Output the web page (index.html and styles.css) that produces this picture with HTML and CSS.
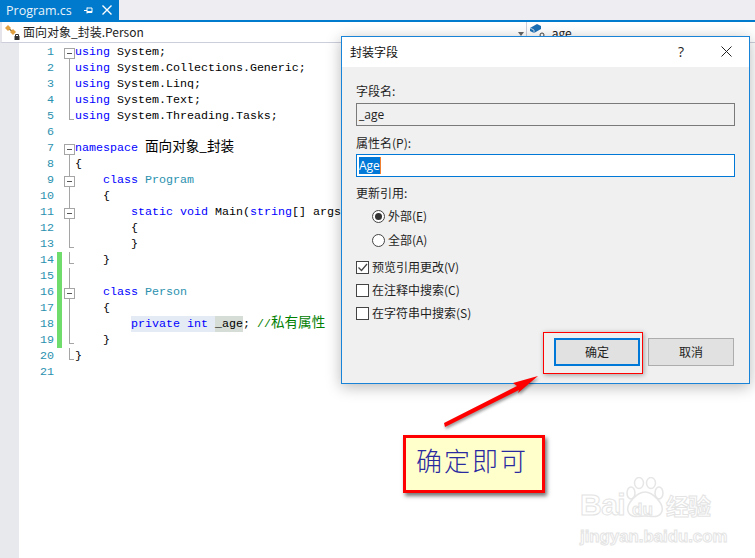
FILE: index.html
```html
<!DOCTYPE html>
<html lang="zh">
<head>
<meta charset="utf-8">
<title>封装字段</title>
<link rel="stylesheet" href="styles.css">
</head>
<body>
<div class="page">
  <div class="tabbar">
    <div class="tab">
      <span class="tab-name">Program.cs</span>
      <svg class="tab-pin" width="9" height="9" viewBox="0 0 9 9"><path d="M0 4.5H3M3 1.5V7.5M3 2H8V6.5H3M3 5.5H8" fill="none" stroke="#fff" stroke-width="1"/></svg>
      <svg class="tab-close" width="10" height="10" viewBox="0 0 10 10"><path d="M.5.5L9.500 9.500M9.500.5L.5 9.500" fill="none" stroke="#fff" stroke-width="1.400"/></svg>
    </div>
  </div>
  <div class="navbar">
    <div class="nav-left">
      <svg class="nav-icon" width="15" height="15" viewBox="0 0 15 15"><path d="M3 3L8 7" stroke="#8a6a30" stroke-width="1.500" fill="none"/><path d="M3 0L6 3L3 6L0 3Z" fill="#e0a040"/><path d="M8 4L11 7L8 10L5 7Z" fill="#e0a040"/><rect x="9.500" y="11" width="5" height="4" fill="#333"/><path d="M10.500 11V9.500H13.500V11" fill="none" stroke="#333"/></svg>
      <span class="nav-text nav-text-left">面向对象_封装.Person</span>
      <span class="nav-arrow"></span>
    </div>
    <div class="nav-right">
      <svg class="nav-icon-r" width="15" height="13" viewBox="0 0 15 13"><path d="M0 4L7 0L11 2V5L4 9L0 7Z" fill="#1c6fb5"/><path d="M0 4L4 6V9" fill="none" stroke="#bcd6ea"/><circle cx="12" cy="11" r="2" fill="none" stroke="#444"/></svg>
      <span class="nav-text">_age</span>
    </div>
  </div>
  <div class="workspace">
    <div class="editor">
      <div class="row"><span class="num">1</span><span class="mark"></span><span class="fold box"></span><code class="code"><b>using</b> System;</code></div>
      <div class="row"><span class="num">2</span><span class="mark"></span><span class="fold line"></span><code class="code"><b>using</b> System.Collections.Generic;</code></div>
      <div class="row"><span class="num">3</span><span class="mark"></span><span class="fold line"></span><code class="code"><b>using</b> System.Linq;</code></div>
      <div class="row"><span class="num">4</span><span class="mark"></span><span class="fold line"></span><code class="code"><b>using</b> System.Text;</code></div>
      <div class="row"><span class="num">5</span><span class="mark"></span><span class="fold end"></span><code class="code"><b>using</b> System.Threading.Tasks;</code></div>
      <div class="row"><span class="num">6</span><span class="mark"></span><span class="fold"></span><code class="code"></code></div>
      <div class="row"><span class="num">7</span><span class="mark"></span><span class="fold box"></span><code class="code"><b>namespace</b> <span class="cjk">面向对象_封装</span></code></div>
      <div class="row"><span class="num">8</span><span class="mark"></span><span class="fold line"></span><code class="code">{</code></div>
      <div class="row"><span class="num">9</span><span class="mark"></span><span class="fold box line"></span><code class="code">    <b>class</b> <i>Program</i></code></div>
      <div class="row"><span class="num">10</span><span class="mark"></span><span class="fold line"></span><code class="code">    {</code></div>
      <div class="row"><span class="num">11</span><span class="mark"></span><span class="fold box line"></span><code class="code">        <b>static</b> <b>void</b> Main(<b>string</b>[] args)</code></div>
      <div class="row"><span class="num">12</span><span class="mark"></span><span class="fold line"></span><code class="code">        {</code></div>
      <div class="row"><span class="num">13</span><span class="mark"></span><span class="fold end"></span><code class="code">        }</code></div>
      <div class="row"><span class="num">14</span><span class="mark on"></span><span class="fold end"></span><code class="code">    }</code></div>
      <div class="row"><span class="num">15</span><span class="mark on"></span><span class="fold line"></span><code class="code"></code></div>
      <div class="row"><span class="num">16</span><span class="mark on"></span><span class="fold box line"></span><code class="code">    <b>class</b> <i>Person</i></code></div>
      <div class="row"><span class="num">17</span><span class="mark on"></span><span class="fold line"></span><code class="code">    {</code></div>
      <div class="row"><span class="num">18</span><span class="mark on"></span><span class="fold line"></span><code class="code">        <span class="hl"><b>private</b> <b>int</b> </span><span class="hl-word">_age</span>; <em>//<span class="cjk">私有属性</span></em></code></div>
      <div class="row"><span class="num">19</span><span class="mark on"></span><span class="fold end"></span><code class="code">    }</code></div>
      <div class="row"><span class="num">20</span><span class="mark"></span><span class="fold end"></span><code class="code">}</code></div>
      <div class="row"><span class="num">21</span><span class="mark"></span><span class="fold"></span><code class="code"></code></div>
    </div>
  </div>

  <div class="dialog">
    <div class="dialog-title">
      <span class="dialog-caption">封装字段</span>
      <span class="dialog-help">?</span>
      <svg class="dialog-close" width="11" height="11" viewBox="0 0 11 11"><path d="M.5.5L10.500 10.500M10.500.5L.5 10.500" fill="none" stroke="#222" stroke-width="1"/></svg>
    </div>
    <div class="dialog-body">
      <div class="label">字段名:</div>
      <div class="input readonly">_age</div>
      <div class="label label-next">属性名(P):</div>
      <div class="input focused"><span class="selected">Age</span></div>
      <div class="label label-group">更新引用:</div>
      <div class="option indent first"><span class="radio checked"></span>外部(E)</div>
      <div class="option indent radio-second"><span class="radio"></span>全部(A)</div>
      <div class="option check-first"><span class="check"><svg width="11" height="11" viewBox="0 0 11 11"><path d="M1.500 5.500L4.500 8.500L10 2" fill="none" stroke="#444" stroke-width="1.300"/></svg></span>预览引用更改(V)</div>
      <div class="option check-next"><span class="check"></span>在注释中搜索(C)</div>
      <div class="option check-next"><span class="check"></span>在字符串中搜索(S)</div>
      <div class="buttons">
        <div class="btn btn-primary">确定</div>
        <div class="btn">取消</div>
      </div>
    </div>
  </div>

  <div class="red-frame"></div>
  <svg class="arrow" width="110" height="65" viewBox="0 0 110 65"><polygon points="103,3 78,10 82,13 9,50 10,54 84,17 83,20" fill="#f00"/></svg>
  <div class="callout">确定即可</div>

  <div class="watermark">
    <svg class="wm-paw" width="42" height="42" viewBox="0 0 42 42"><g fill="#fff" stroke="#e6e6e6" stroke-width="1.500"><ellipse cx="7" cy="16" rx="4" ry="6"/><ellipse cx="15" cy="6" rx="4.500" ry="5.500"/><ellipse cx="27" cy="6" rx="4.500" ry="5.500"/><ellipse cx="35" cy="16" rx="4" ry="6"/><path d="M21 15C29 15 40 27 38 34C36 42 26 39 21 39C16 39 6 42 4 34C2 27 13 15 21 15Z"/></g></svg>
    <div class="wm-main"><span class="wm-bai">Bai</span><span class="wm-du">du</span><span class="wm-cn">经验</span></div>
    <div class="wm-url">jingyan.baidu.com</div>
  </div>
</div>
</body>
</html>
```
FILE: styles.css
```css
* { box-sizing: border-box; }
html, body { margin: 0; padding: 0; background: #fff; }
.page {
  position: relative;
  width: 755px;
  height: 558px;
  overflow: hidden;
  font-family: "Noto Sans CJK SC", "Noto Sans", sans-serif;
  font-size: 12px;
  color: #1e1e1e;
}
.tabbar {
  height: 22px;
  background: #eeeef2;
  border-bottom: 2px solid #007acc;
}
.tab {
  width: 119px;
  height: 20px;
  background: #007acc;
  color: #e8f3fb;
  display: flex;
  align-items: center;
  padding-left: 6px;
}
.tab-name { font-family: "Open Sans", sans-serif; font-size: 12.500px; width: 78px; }
.tab-close { margin-left: 9px; }
.navbar {
  height: 21px;
  display: flex;
  background: #fff;
  border-bottom: 1px solid #cccedb;
  border-left: 2px solid #e4e4ea;
}
.nav-left {
  width: 525px;
  display: flex;
  align-items: center;
  padding-left: 3px;
  position: relative;
  border-right: 1px solid #cccedb;
}
.nav-text { margin-left: 4px; line-height: 20px; font-size: 12px; color: #222; }
.nav-text-left { margin-left: 3px; }
.nav-arrow {
  position: absolute;
  right: 2px;
  top: 10px;
  border: 3px solid transparent;
  border-top: 4px solid #666;
}
.nav-right { display: flex; align-items: flex-start; padding: 2px 0 0 3px; }
.nav-right .nav-text { margin: -2px 0 0 0; padding-top: 1px; }
.workspace {
  height: 515px;
  background: #e8e9ec;
  padding-left: 19px;
}
.editor {
  height: 100%;
  background: #fff;
  padding-top: 1px;
}
.row {
  display: flex;
  height: 16px;
  line-height: 16px;
}
.num {
  width: 35px;
  text-align: right;
  font-family: "Liberation Mono", monospace;
  font-size: 11.67px;
  color: #2b91af;
}
.mark { width: 5px; margin-left: 3px; }
.mark.on { background: #6fdc6c; }
.fold { width: 11px; position: relative; margin-left: 2px; }
.fold.line::before, .fold.box::before, .fold.end::before {
  content: "";
  position: absolute;
  left: 5px;
  top: 0;
  bottom: 0;
  border-left: 1px solid #a5a5a5;
}
.fold.end::before { bottom: 4px; width: 4px; border-bottom: 1px solid #a5a5a5; }
.fold.box::before { top: 6px; }
.fold.box.line::before { top: 0; }
.fold.box::after {
  content: "";
  position: absolute;
  left: 0;
  top: 4px;
  width: 9px;
  height: 9px;
  background: linear-gradient(#555, #555) center / 5px 1px no-repeat #fff;
  border: 1px solid #a5a5a5;
}
.code {
  font-family: "Liberation Mono", monospace;
  font-size: 11.67px;
  color: #000;
  white-space: pre;
}
.code b { font-weight: normal; color: #0000ff; }
.code i { font-style: normal; color: #2b91af; }
.code em { font-style: normal; color: #008000; }
.cjk { font-family: "Noto Sans CJK SC", sans-serif; font-size: 13.600px; line-height: 0; }
.hl { background: #e4ebf4; display: inline-block; height: 16px; }
.hl-word { background: #d5ddd6; display: inline-block; height: 16px; }

.dialog {
  position: absolute;
  left: 341px;
  top: 36px;
  width: 409px;
  height: 348px;
  background: #f0f0f0;
  border: 1px solid #1883d7;
  box-shadow: 0 3px 14px rgba(0, 0, 0, .28);
}
.dialog-title {
  height: 30px;
  background: #fff;
  display: flex;
  align-items: center;
  padding-left: 8px;
  padding-bottom: 2px;
}
.dialog-caption { font-size: 12px; color: #111; flex: 1; }
.dialog-help { font-family: "Open Sans", sans-serif; font-size: 14px; margin-right: 37px; }
.dialog-close { margin-right: 17px; }
.dialog-body { padding: 15px 14px 0; }
.label { height: 18px; line-height: 18px; }
.label-next { margin-top: 8px; }
.label-group { margin-top: 7px; }
.input {
  height: 23px;
  margin-top: 3px;
  border: 1px solid #7a7a7a;
  line-height: 22px;
  padding-left: 2px;
  font-family: "Open Sans", sans-serif;
  font-size: 12px;
}
.input.focused { background: #fff; border-color: #0078d7; margin-top: 2px; }
.selected {
  display: inline-block;
  background: #0078d7;
  color: #fff;
  height: 17px;
  line-height: 17px;
  vertical-align: top;
  margin-top: 2px;
  border-right: 1px solid #f08030;
}
.option { display: flex; align-items: center; height: 18px; line-height: 18px; }
.indent { padding-left: 16px; }
.first { margin-top: 5px; }
.radio-second { margin-top: 6px; }
.check-first { margin-top: 9px; }
.check-next { margin-top: 5px; }
.radio {
  width: 13px;
  height: 13px;
  border: 1px solid #444;
  border-radius: 50%;
  background: #fff;
  margin-right: 3px;
  display: flex;
}
.radio.checked::after {
  content: "";
  width: 7px;
  height: 7px;
  margin: 2px;
  border-radius: 50%;
  background: #333;
}
.check {
  width: 13px;
  height: 13px;
  border: 1px solid #444;
  background: #fff;
  margin-right: 3px;
  display: flex;
}
.buttons {
  display: flex;
  justify-content: flex-end;
  gap: 8px;
  margin-top: 16px;
  padding-right: 1px;
}
.btn {
  width: 86px;
  height: 28px;
  background: #e1e1e1;
  border: 1px solid #adadad;
  text-align: center;
  line-height: 26px;
  font-size: 12px;
}
.btn-primary { border: 2px solid #0078d7; line-height: 24px; }

.red-frame {
  position: absolute;
  left: 543px;
  top: 332px;
  width: 100px;
  height: 42px;
  border: 1px solid #f00;
  box-shadow: 1px 1px 5px rgba(0, 0, 0, .35);
}
.arrow {
  position: absolute;
  left: 435px;
  top: 373px;
  filter: drop-shadow(1px 2px 1.500px rgba(0, 0, 0, .4));
}
.callout {
  position: absolute;
  left: 403px;
  top: 435px;
  width: 142px;
  height: 58px;
  background: #ffffcc;
  border: 3px solid #f00;
  box-shadow: 2px 3px 4px rgba(0, 0, 0, .55);
  color: #2a2aa0;
  font-family: "Noto Sans CJK SC", sans-serif;
  font-weight: 300;
  font-size: 26px;
  letter-spacing: 2px;
  line-height: 44px;
  padding-left: 10px;
}
.watermark {
  position: absolute;
  left: 580px;
  top: 477px;
  width: 134px;
  height: 66px;
  color: #fff;
  -webkit-text-stroke: 1px #e4e4e4;
  font-family: "Liberation Sans", sans-serif;
}
.wm-paw { position: absolute; left: 44px; top: 0; }
.wm-main {
  position: relative;
  display: flex;
  align-items: baseline;
  padding-top: 13px;
  height: 50px;
  font-weight: bold;
  line-height: 30px;
}
.wm-bai { font-size: 30px; width: 46px; letter-spacing: -.5px; }
.wm-du { font-size: 17px; width: 40px; padding-left: 6px; }
.wm-cn { font-family: "Noto Sans CJK SC", sans-serif; font-size: 23px; white-space: nowrap; letter-spacing: -1px; }
.wm-url { font-size: 16.800px; font-weight: bold; margin-top: 0; white-space: nowrap; }
```
